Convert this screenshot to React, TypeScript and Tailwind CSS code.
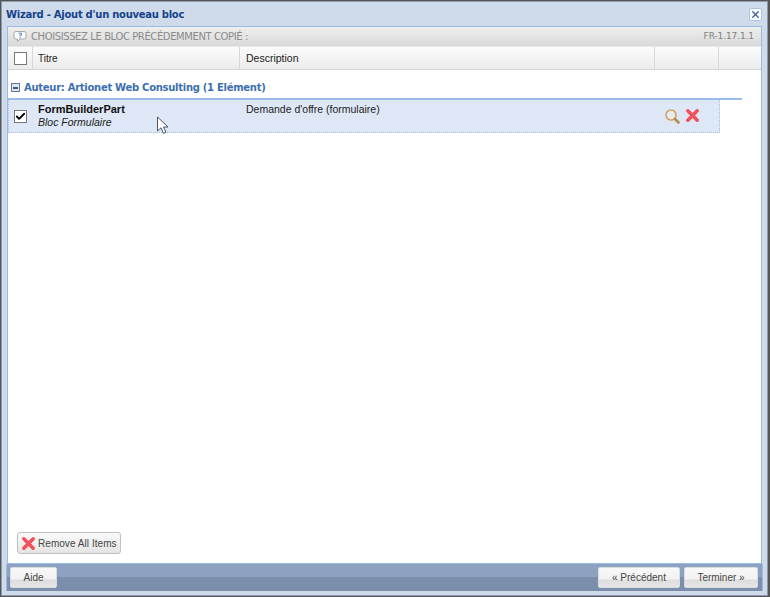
import { Check, X } from 'lucide-react';

function RedCross({ size }: { size: number }) {
  return (
    <svg width={size} height={size} viewBox="0 0 16 16" className="shrink-0">
      <path d="M3 3 L13 13 M13 3 L3 13" stroke="#f0525c" strokeWidth="3.8" strokeLinecap="round" />
    </svg>
  );
}

function Magnifier() {
  return (
    <svg width="17" height="17" viewBox="0 0 17 17" className="shrink-0">
      <circle cx="7" cy="7" r="5" fill="#f4eee0" fillOpacity="0.5" stroke="#cfa66c" strokeWidth="1.7" />
      <path d="M11 11 L14.5 14.5" stroke="#b98d4f" strokeWidth="2.8" strokeLinecap="round" />
    </svg>
  );
}

function FooterButton({ label, className }: { label: string; className: string }) {
  return (
    <button className={`h-[21px] rounded-[2px] border border-[#d8dde4] bg-[linear-gradient(#f8f8f8_0%,#f2f2f2_60%,#dcdcdc_61%,#e6e6e6_100%)] text-[10px] text-[#444] font-['Liberation_Sans',sans-serif] ${className}`}>
      {label}
    </button>
  );
}

export default function App() {
  return (
    <div className="w-[770px] h-[597px] overflow-hidden bg-[#555] pt-px font-['Liberation_Sans',sans-serif]">
      <div className="h-[595px] ml-px mr-[2px] flex flex-col border border-[#8a9bb0] bg-[#cfdbea] px-[5px]">
        <div className="h-[24px] shrink-0 flex items-center justify-between">
          <span className="-ml-px text-[10px] font-bold text-[#15428b] font-['DejaVu_Sans',sans-serif] tracking-[-0.27px]">
            Wizard - Ajout d'un nouveau bloc
          </span>
          <span className="w-[13px] h-[13px] flex items-center justify-center rounded-[2px] bg-white border border-[#a9c4ea]">
            <X size={11} strokeWidth={3} className="text-[#3f5f9c]" />
          </span>
        </div>

        <div className="flex-1 min-h-0 flex flex-col bg-white border border-[#99bbe8]">
          <div className="h-[20px] shrink-0 flex items-center justify-between pl-[5px] pr-[7px] bg-[linear-gradient(#efefef,#d9d9d9)] border-b border-[#e8e8e8]">
            <div className="flex items-center gap-[4px]">
              <svg width="14" height="13" viewBox="0 0 14 13">
                <path d="M3 1.5 H11 Q13 1.5 13 3.5 V7 Q13 9 11 9 H7 L4.5 11.5 V9 H3 Q1 9 1 7 V3.5 Q1 1.5 3 1.5 Z" fill="#fff" stroke="#a8a8a8" />
                <path d="M5.5 3.5 Q7 2.5 8.5 3.5 Q8.8 5 7 5.5 V6.3" fill="none" stroke="#5a8fd0" strokeWidth="1.2" />
                <circle cx="7" cy="7.7" r=".7" fill="#5a8fd0" />
              </svg>
              <span className="text-[10px] text-[#8a8a8a] font-['DejaVu_Sans',sans-serif] tracking-[-0.4px]">
                CHOISISSEZ LE BLOC PRÉCÉDEMMENT COPIÉ :
              </span>
            </div>
            <span className="text-[9px] font-medium text-[#808080] font-['DejaVu_Sans',sans-serif] tracking-[-0.1px]">FR-1.17.1.1</span>
          </div>

          <div className="h-[23px] shrink-0 flex bg-[linear-gradient(#fbfbfb,#ececec)] border-b border-[#d4d4d4] text-[10px] text-[#222]">
            <div className="w-[25px] flex items-center justify-center border-r border-[#d8d8d8]">
              <span className="w-[13px] h-[13px] bg-white border border-[#777]" />
            </div>
            <div className="w-[207px] flex items-center pl-[5px] border-r border-[#d8d8d8]">Titre</div>
            <div className="w-[415px] flex items-center pl-[6px] pt-px border-r border-[#d8d8d8] text-[10.5px]">Description</div>
            <div className="w-[64px] border-r border-[#d8d8d8]" />
            <div className="flex-1" />
          </div>

          <div className="flex-1 min-h-0 flex flex-col">
            <div className="mt-[8px] h-[19px] w-[731px] flex items-center gap-[4px] pl-[3px] pb-px border-b-2 border-[#99bbe8] box-content">
              <span className="w-[9px] h-[9px] flex items-center justify-center bg-[#dfe6ef] border border-[#5f7a9f]">
                <span className="w-[5px] h-[2px] bg-[#3c5a85]" />
              </span>
              <span className="text-[10px] font-bold text-[#3d6fae] font-['DejaVu_Sans',sans-serif] tracking-[-0.28px]">
                Auteur: Artionet Web Consulting (1 Elément)
              </span>
            </div>

            <div className="h-[33px] w-[712px] flex bg-[#dee7f6] border-b border-dotted border-[#a9bfe0] border-l border-r">
              <div className="w-[23px] flex items-center justify-center">
                <span className="w-[13px] h-[13px] flex items-center justify-center bg-white border border-[#777]">
                  <Check size={11} strokeWidth={4} className="text-black" />
                </span>
              </div>
              <div className="w-[207px] pl-[6px] pt-[3px] text-[11px] leading-[13px] text-[#111]">
                <div className="font-bold">FormBuilderPart</div>
                <div className="italic text-[10.5px] text-[#222]">Bloc Formulaire</div>
              </div>
              <div className="flex-1 pl-[7px] pt-[3px] text-[10.5px] leading-[13px] text-[#222]">Demande d'offre (formulaire)</div>
              <div className="w-[55px] pt-[8px] flex items-start gap-[4px]">
                <Magnifier />
                <RedCross size={15} />
              </div>
            </div>

            <div className="flex-1 relative">
              <svg width="14" height="20" viewBox="0 0 14 20" className="absolute left-[148px] top-[-17px]">
                <path d="M1.5 1 V15 L5 11.8 L7.5 17.5 L10 16.3 L7.5 11 H12 Z" fill="#fff" stroke="#4a5560" strokeWidth="1" />
              </svg>
            </div>

            <div className="shrink-0 pl-[9px] pb-[9px]">
              <button className="h-[22px] w-[104px] flex items-center gap-[2px] pl-[3px] rounded-[3px] border border-[#c0c0c0] bg-[linear-gradient(#fafafa,#e4e4e4)] text-[10px] text-[#444] tracking-[0.05px]">
                <RedCross size={15} />
                Remove All Items
              </button>
            </div>
          </div>
        </div>

        <div className="h-[27px] shrink-0 -mx-px flex items-center justify-between pl-[3px] pr-[4px] border-x border-[#99bbe8] bg-[linear-gradient(#8ca2c0_0%,#8ca2c0_48%,#7b8fac_49%,#7b8fac_100%)]">
          <FooterButton label="Aide" className="w-[47px]" />
          <div className="flex gap-[4px]">
            <FooterButton label="« Précédent" className="w-[82px]" />
            <FooterButton label="Terminer »" className="w-[74px]" />
          </div>
        </div>
        <div className="h-[4px] shrink-0" />
      </div>
    </div>
  );
}
